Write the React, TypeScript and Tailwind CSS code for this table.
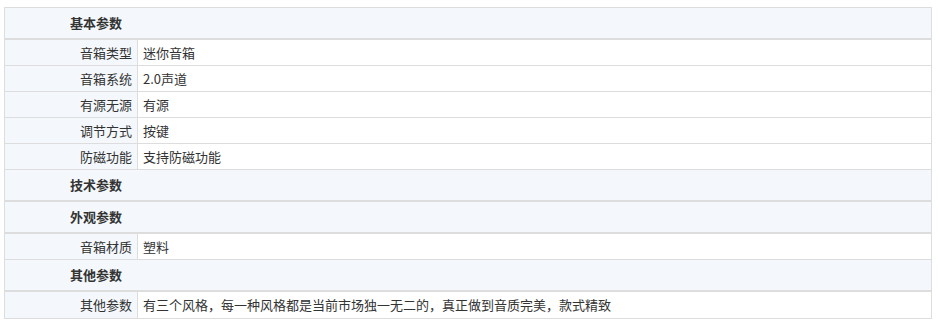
import React from 'react';

type Row = { label: string; value: string };
type Section = { title: string; rows: Row[] };

const sections: Section[] = [
  {
    title: '基本参数',
    rows: [
      { label: '音箱类型', value: '迷你音箱' },
      { label: '音箱系统', value: '2.0声道' },
      { label: '有源无源', value: '有源' },
      { label: '调节方式', value: '按键' },
      { label: '防磁功能', value: '支持防磁功能' },
    ],
  },
  { title: '技术参数', rows: [] },
  { title: '外观参数', rows: [{ label: '音箱材质', value: '塑料' }] },
  {
    title: '其他参数',
    rows: [{ label: '其他参数', value: '有三个风格，每一种风格都是当前市场独一无二的，真正做到音质完美，款式精致' }],
  },
];

const SpecRow: React.FC<{ row: Row; last: boolean }> = ({ row, last }) => (
  <div className={`flex h-[26px] ${last ? '' : 'border-b border-[#ddd]'}`}>
    <div className="w-[133px] shrink-0 bg-[#f4f8fc] border-r border-[#ddd] flex items-center justify-end pr-[5px]">
      {row.label}
    </div>
    <div className="flex-1 bg-white flex items-center pl-[5px]">{row.value}</div>
  </div>
);

export default function App() {
  return (
    <div className="w-[939px] h-[329px] bg-white text-[13px] text-[#333] font-['Microsoft_YaHei','Noto_Sans_CJK_SC',sans-serif] overflow-hidden">
      <div className="pt-[7px] pl-[4px]">
        <div className="w-[928px] border border-[#ddd]">
          {sections.map((s, si) => (
            <div key={s.title}>
              <div className="h-[32px] bg-[#f4f8fc] border-b-2 border-[#ddd] flex items-center pl-[65px] font-bold">
                {s.title}
              </div>
              {s.rows.map((r, ri) => (
                <SpecRow
                  key={r.label}
                  row={r}
                  last={si === sections.length - 1 && ri === s.rows.length - 1}
                />
              ))}
            </div>
          ))}
        </div>
      </div>
      <div className="mt-[10px] h-px bg-[#e8e8e8]" />
    </div>
  );
}
